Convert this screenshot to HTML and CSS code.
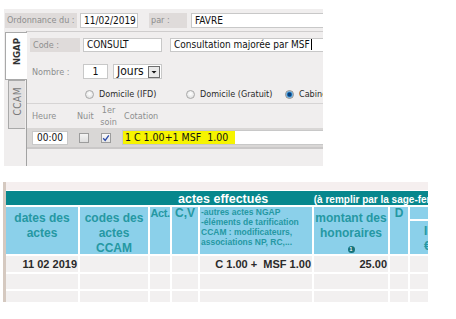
FILE: index.html
```html
<!DOCTYPE html>
<html lang="fr">
<head>
  <meta charset="UTF-8">
  <meta name="viewport" content="width=device-width, initial-scale=1.0">
  <title>Saisie des actes</title>
  <link rel="stylesheet" href="styles.css">
</head>
<body>
  <div class="saisie">
    <div class="ligne ordo">
      <span class="etiq etiq-ordo">Ordonnance du :</span>
      <span class="champ champ-date">11/02/2019</span>
      <span class="etiq etiq-par">par :</span>
      <span class="champ champ-favre">FAVRE</span>
    </div>

    <div class="cadre">
      <div class="onglets">
        <div class="onglet actif"><span>NGAP</span></div>
        <div class="onglet"><span>CCAM</span></div>
      </div>

      <div class="contenu">
        <div class="ligne code">
          <span class="etiq etiq-code">Code :</span>
          <span class="champ champ-code">CONSULT</span>
          <span class="champ champ-libelle">Consultation majorée par MSF<i class="curseur"></i></span>
        </div>

        <div class="ligne nombre">
          <span class="lbl-nombre">Nombre :</span>
          <span class="champ champ-nb">1</span>
          <span class="champ liste">Jours
            <svg class="fleche" width="12" height="12" viewBox="0 0 12 12">
              <rect x="0.5" y="0.5" width="11" height="11" fill="#e9e9e9" stroke="#6d6d6d"/>
              <path d="M3.5 5 L8.5 5 L6 7.5 Z" fill="#111"/>
            </svg>
          </span>
        </div>

        <div class="ligne lieux">
          <span class="radio r-ifd"><i class="rond"></i>Domicile (IFD)</span>
          <span class="radio r-gratuit"><i class="rond"></i>Domicile (Gratuit)</span>
          <span class="radio"><i class="rond coche"></i>Cabinet</span>
        </div>

        <div class="ligne entetes">
          <span class="col-heure">Heure</span>
          <span class="col-nuit">Nuit</span>
          <span class="col-soin">1er<br>soin</span>
          <span class="col-cotation">Cotation</span>
        </div>

        <div class="ligne acte">
          <span class="champ champ-heure">00:00</span>
          <span class="case case-nuit"></span>
          <span class="case case-soin">
            <svg width="8" height="8" viewBox="0 0 8 8"><path d="M1.2 4.2 L3.2 6.4 L6.8 1.4" fill="none" stroke="#2b4aa8" stroke-width="1.3"/></svg>
          </span>
          <span class="champ champ-cotation"><span class="surligne">1 C 1.00+1 MSF  1.00</span></span>
        </div>
      </div>
    </div>
  </div>

  <div class="feuille">
    <div class="feuille-haut"></div>
    <div class="bandeau">
      <span class="titre">actes effectués</span>
      <span class="sous-titre">(à remplir par la sage-femme)</span>
    </div>
    <div class="grille">
      <div class="th th-haut">dates des<br>actes</div>
      <div class="th th-haut">codes des<br>actes<br>CCAM</div>
      <div class="th th-court th-act">Act.</div>
      <div class="th th-court">C,V</div>
      <div class="th th-autres">-autres actes NGAP<br>-éléments de tarification<br>CCAM : modificateurs,<br>associations NP, RC,...</div>
      <div class="th th-haut">montant des<br>honoraires<br><span class="puce">1</span></div>
      <div class="th th-court">D</div>
      <div class="th-ik">
        <div class="ik-haut"></div>
        <div class="ik-bas">IK<br>€</div>
      </div>

      <div class="td">11 02 2019</div>
      <div class="td"></div>
      <div class="td"></div>
      <div class="td"></div>
      <div class="td">C 1.00 +  MSF 1.00</div>
      <div class="td">25.00</div>
      <div class="td"></div>
      <div class="td"></div>

      <div class="td"></div>
      <div class="td"></div>
      <div class="td"></div>
      <div class="td"></div>
      <div class="td"></div>
      <div class="td"></div>
      <div class="td"></div>
      <div class="td"></div>

      <div class="td"></div>
      <div class="td"></div>
      <div class="td"></div>
      <div class="td"></div>
      <div class="td"></div>
      <div class="td"></div>
      <div class="td"></div>
      <div class="td"></div>
    </div>
  </div>
</body>
</html>
```

FILE: styles.css
```css
body {
  margin: 0;
  background: #fff;
  font-family: "Liberation Sans", Arial, sans-serif;
}

/* ---- panneau de saisie ---- */
.saisie {
  width: 319px;
  height: 157px;
  margin: 9px 0 0 4px;
  background: #f0eeee;
  font-family: "DejaVu Sans Condensed", "DejaVu Sans", sans-serif;
  font-stretch: condensed;
  overflow: hidden;
}

.ligne {
  display: flex;
  align-items: center;
}

.ordo {
  height: 15px;
  padding-top: 4px;
}

.etiq {
  height: 15px;
  line-height: 15px;
  background: #dfdbda;
  color: #8e8e8e;
  font-size: 9px;
  padding-left: 2px;
  box-sizing: border-box;
}

.etiq-ordo { width: 72px; margin-left: 1px; }
.etiq-par { width: 38px; margin-left: 11px; }

.champ {
  height: 15px;
  line-height: 13px;
  background: #fff;
  border: 1px solid #c8c8c8;
  box-sizing: border-box;
  font-size: 10px;
  color: #111;
  padding-left: 3px;
  white-space: nowrap;
  overflow: hidden;
}

.champ-date { width: 58px; margin-left: 3px; }
.champ-favre { flex: 1; margin-left: 4px; border-right: none; }

.cadre {
  display: flex;
  margin-top: 3px;
  height: 135px;
}

.onglets {
  width: 22px;
  padding-top: 1px;
  display: flex;
  flex-direction: column;
}

.onglet {
  display: flex;
  align-items: center;
  justify-content: center;
  box-sizing: border-box;
  width: 17px;
  height: 49px;
  margin-left: 4px;
  background: #e3e1e1;
  border: 1px solid #a9a9a9;
  border-right: none;
  color: #7a7a7a;
  font-size: 10px;
  letter-spacing: 0.5px;
  padding-bottom: 6px;
}

.onglet span {
  writing-mode: vertical-rl;
  transform: rotate(180deg);
}

.onglet.actif {
  position: relative;
  z-index: 1;
  width: 22px;
  height: 48px;
  margin-left: 1px;
  background: #fff;
  color: #333;
  font-weight: bold;
  font-size: 9.5px;
  letter-spacing: 0;
  padding-bottom: 9px;
}

.contenu {
  flex: 1;
  border-left: 1px solid #a2a2a2;
  border-top: 1px solid #cfcdcd;
}

.code {
  margin-top: 6px;
  height: 14px;
  padding-left: 3px;
}

.etiq-code { width: 50px; height: 14px; line-height: 14px; padding-left: 3px; }
.code .champ { height: 14px; line-height: 12px; }
.champ-code { width: 79px; margin-left: 3px; }
.champ-libelle { flex: 1; margin-left: 8px; border-right: none; }

.curseur {
  display: inline-block;
  width: 1px;
  height: 11px;
  margin-left: 1px;
  background: #000;
  vertical-align: -2px;
}

.nombre {
  margin-top: 12px;
  height: 15px;
  padding-left: 5px;
}

.lbl-nombre {
  width: 51px;
  color: #8e8e8e;
  font-size: 9px;
}

.champ-nb { width: 25px; padding: 0; text-align: center; font-size: 10.5px; }

.liste {
  width: 49px;
  margin-left: 5px;
  display: flex;
  align-items: center;
  justify-content: space-between;
  padding-right: 1px;
  font-size: 12px;
}

.lieux {
  margin-top: 9px;
  height: 12px;
  padding-left: 58px;
  font-size: 9px;
  color: #2a2a2a;
  white-space: nowrap;
}

.radio {
  display: flex;
  align-items: center;
}

.r-ifd { width: 101px; }
.r-gratuit { width: 99px; }

.rond {
  width: 9px;
  height: 9px;
  margin-right: 5px;
  border: 1px solid #a8a8a8;
  border-radius: 50%;
  box-sizing: border-box;
  background: radial-gradient(circle at 50% 40%, #fff, #d8d8d8);
}

.rond.coche {
  border-color: #8d8d8d;
  background: radial-gradient(circle, #0c3f78 0 1.5px, #2f8fd6 2.5px, #bcd8ee 3.5px);
}

.entetes {
  height: 24px;
  border-top: 1px solid #d6d4d4;
  margin-top: 3px;
  padding-left: 5px;
  color: #8e8e8e;
  font-size: 9px;
}

.col-heure { width: 45px; }
.col-nuit { width: 22px; }
.col-soin { width: 19px; text-align: center; line-height: 12px; }
.col-cotation { margin-left: 6px; }

.acte {
  height: 19px;
  background: #d9d7d6;
  border-bottom: 2px solid #cac8c8;
  padding-left: 5px;
}

.champ-heure { width: 36px; height: 14px; line-height: 12px; padding: 0; text-align: center; }

.case {
  width: 10px;
  height: 10px;
  box-sizing: border-box;
  border: 1px solid #9c9c9c;
  background: linear-gradient(#f4f4f4, #dedede);
  display: flex;
  align-items: center;
  justify-content: center;
}

.case-nuit { margin-left: 11px; }
.case-soin { margin-left: 12px; background: linear-gradient(#fafafa, #e6e6e6); }

.champ-cotation {
  flex: 1;
  margin-left: 11px;
  height: 15px;
  padding: 0;
  border-right: none;
}

.surligne {
  display: inline-block;
  height: 13px;
  padding: 0 7px 0 2px;
  background: #f6f400;
  white-space: pre;
  font-size: 10.5px;
}

/* ---- feuille de soins ---- */
.feuille {
  width: 422px;
  height: 120px;
  margin: 16px 0 0 3px;
  border-left: 3px solid #d5c9c0;
  background: #fff;
  overflow: hidden;
}

.feuille-haut {
  height: 8px;
  margin-bottom: 1px;
  background: #f5efef;
}

.bandeau {
  height: 14px;
  line-height: 14px;
  padding-left: 172px;
  background: #07878d;
  color: #fff;
  font-weight: bold;
  white-space: nowrap;
  overflow: hidden;
}

.titre { font-size: 12.5px; }
.sous-titre { font-size: 10px; margin-left: 41px; }

.grille {
  display: grid;
  grid-template-columns: 72px 68px 20px 26px 112px 74px 18px 18px;
  grid-template-rows: 47px 16px 15px 11px;
  gap: 2px;
  margin-top: 2px;
}

.th {
  background: #8bd0ea;
  color: #2598a3;
  font-weight: bold;
  font-size: 12px;
  line-height: 15px;
  text-align: center;
  white-space: nowrap;
  overflow: hidden;
}

.th-haut { padding-top: 4px; }
.th-court { font-size: 12px; line-height: 13px; }
.th-act { font-size: 11px; letter-spacing: -0.4px; }

.th-autres {
  text-align: left;
  font-size: 8.5px;
  line-height: 10px;
  padding-left: 1px;
}

.puce {
  display: inline-block;
  width: 7px;
  height: 7px;
  border-radius: 50%;
  background: #16737a;
  color: #fff;
  font-size: 5px;
  line-height: 7px;
  vertical-align: 1px;
}

.th-ik {
  display: flex;
  flex-direction: column;
  gap: 2px;
  overflow: hidden;
}

.ik-haut { height: 15px; background: #8bd0ea; }

.ik-bas {
  flex: 1;
  background: #8bd0ea;
  color: #2598a3;
  font-weight: bold;
  font-size: 12px;
  line-height: 15px;
  padding: 3px 0 0 14px;
  white-space: nowrap;
}

.td {
  background: #f2f0f0;
  color: #2a2a2a;
  font-weight: bold;
  font-size: 11px;
  line-height: 16px;
  text-align: right;
  padding-right: 1px;
  white-space: pre;
}
```
